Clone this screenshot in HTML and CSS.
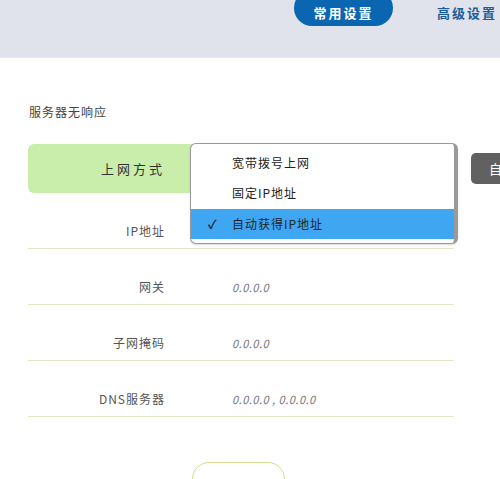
FILE: index.html
```html
<!DOCTYPE html>
<html lang="zh-CN">
<head>
    <meta charset="UTF-8">
    <meta name="viewport" content="width=device-width, initial-scale=1.0">
    <title>上网设置</title>
    <link rel="stylesheet" href="styles.css">
</head>
<body>
    <div class="header">
        <nav class="tabs">
            <a class="tab active" href="#">常用设置</a>
            <a class="tab" href="#">高级设置</a>
        </nav>
    </div>

    <div class="main">
        <p class="status">服务器无响应</p>

        <form class="setup">
            <div class="mode-line">
                <div class="row mode-row">
                    <span class="label">上网方式</span>
                    <!-- open select menu -->
                    <ul class="menu">
                        <li>宽带拨号上网</li>
                        <li>固定IP地址</li>
                        <li class="selected"><span class="check">✓</span>自动获得IP地址</li>
                    </ul>
                </div>
                <button type="button" class="side-btn">自</button>
            </div>

            <div class="row">
                <span class="label">IP地址</span>
                <span class="value"></span>
            </div>
            <div class="row">
                <span class="label">网关</span>
                <span class="value">0.0.0.0</span>
            </div>
            <div class="row">
                <span class="label">子网掩码</span>
                <span class="value">0.0.0.0</span>
            </div>
            <div class="row">
                <span class="label">DNS服务器</span>
                <span class="value">0.0.0.0 , 0.0.0.0</span>
            </div>

            <div class="actions">
                <button type="submit" class="save-btn">保存</button>
            </div>
        </form>
    </div>
</body>
</html>
```

FILE: styles.css
```css
body {
    margin: 0;
    font-family: "Noto Sans CJK SC", "Noto Sans", sans-serif;
    background-color: #fff;
    color: #444;
    overflow: hidden;
}
.header {
    height: 57px;
    background-color: #e1e3ec;
    border-bottom: 1px solid #e6e8ef;
}
.tabs {
    display: flex;
    justify-content: flex-end;
    align-items: flex-start;
    gap: 44px;
    padding-right: 3px;
}
.tab {
    text-decoration: none;
    font-size: 13px;
    font-weight: bold;
    letter-spacing: 2px;
    color: #1d5d98;
    line-height: 26px;
}
.tab.active {
    width: 99px;
    height: 36px;
    margin-top: -10px;
    padding-top: 10px;
    box-sizing: border-box;
    text-align: center;
    background-color: #0b66b1;
    color: #fff;
    border-radius: 18px;
}
.main {
    padding: 0 0 0 28px;
}
.status {
    margin: 44px 0 22px 1px;
    font-size: 12px;
    letter-spacing: 1px;
    color: #444;
    line-height: 20px;
}
.setup {
    width: 426px;
}
.mode-line {
    display: flex;
    align-items: center;
    gap: 17px;
}
.row {
    display: flex;
    align-items: flex-end;
    height: 56px;
    padding-bottom: 8px;
    box-sizing: border-box;
    border-bottom: 1.5px solid #dfe9c4;
}
.label {
    width: 137px;
    flex-shrink: 0;
    text-align: right;
    font-size: 12px;
    letter-spacing: 1px;
    color: #555;
    line-height: 18px;
}
.value {
    margin-left: 67px;
    font-size: 11px;
    font-style: italic;
    letter-spacing: 0.5px;
    color: #777;
    line-height: 18px;
}
.mode-row {
    position: relative;
    width: 426px;
    flex-shrink: 0;
    height: 49px;
    padding: 0;
    align-items: center;
    background-color: #c9edab;
    border-bottom: none;
    border-radius: 6px;
}
.mode-row .label {
    font-size: 13px;
    letter-spacing: 3px;
    color: #333;
}
.menu {
    position: absolute;
    left: 162px;
    top: -1px;
    width: 263px;
    height: 95px;
    margin: 0;
    padding: 4px 0 0;
    list-style: none;
    background-color: #fff;
    border: 1.5px solid #9a9a9a;
    border-right-width: 4px;
    border-radius: 6px;
    box-shadow: 0 1px 2px rgba(0,0,0,0.15);
    z-index: 2;
}
.menu li {
    height: 30px;
    line-height: 30px;
    padding-left: 41px;
    font-size: 12px;
    letter-spacing: 1px;
    color: #222;
    position: relative;
}
.menu li.selected {
    margin-top: 1px;
    background-color: #3fa7f2;
}
.check {
    position: absolute;
    left: 17px;
    font-size: 12px;
    font-weight: bold;
}
.side-btn {
    width: 50px;
    height: 31px;
    flex-shrink: 0;
    border: none;
    border-radius: 5px;
    background-color: #616161;
    color: #fff;
    font-family: inherit;
    font-size: 13px;
    text-align: left;
    padding-left: 18px;
}
.actions {
    display: flex;
    justify-content: center;
    padding-top: 45px;
    padding-right: 6px;
}
.save-btn {
    width: 93px;
    height: 34px;
    border: 1.5px solid #cedf90;
    border-radius: 17px;
    background-color: #fff;
    color: #555;
    font-family: inherit;
    font-size: 13px;
    letter-spacing: 3px;
    padding-top: 14px;
}
```
